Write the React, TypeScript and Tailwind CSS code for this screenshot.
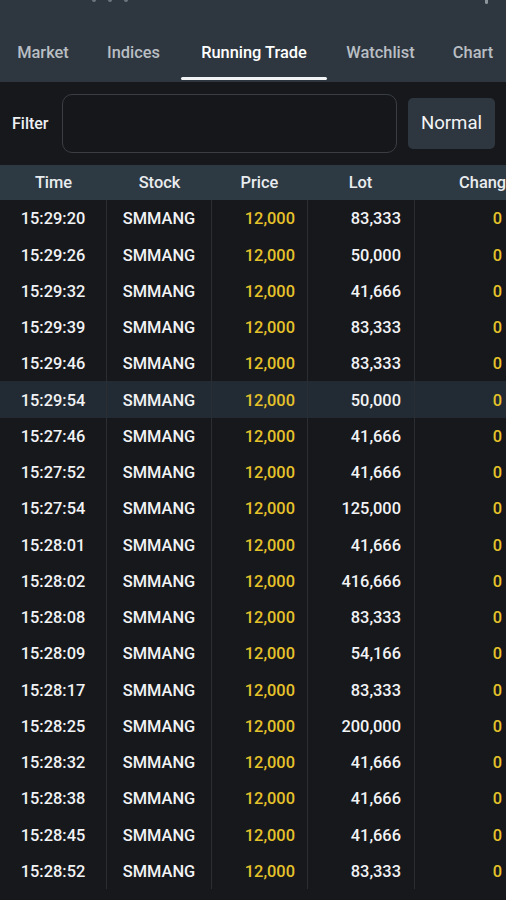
import React from "react";

const tabs = [
  { label: "Market", w: "w-[86px]" },
  { label: "Indices", w: "w-[95px]" },
  { label: "Running Trade", w: "w-[146px]", active: true },
  { label: "Watchlist", w: "w-[107px]" },
  { label: "Chart", w: "w-[78px]" },
];

const trades: [string, string][] = [
  ["15:29:20", "83,333"],
  ["15:29:26", "50,000"],
  ["15:29:32", "41,666"],
  ["15:29:39", "83,333"],
  ["15:29:46", "83,333"],
  ["15:29:54", "50,000"],
  ["15:27:46", "41,666"],
  ["15:27:52", "41,666"],
  ["15:27:54", "125,000"],
  ["15:28:01", "41,666"],
  ["15:28:02", "416,666"],
  ["15:28:08", "83,333"],
  ["15:28:09", "54,166"],
  ["15:28:17", "83,333"],
  ["15:28:25", "200,000"],
  ["15:28:32", "41,666"],
  ["15:28:38", "41,666"],
  ["15:28:45", "41,666"],
  ["15:28:52", "83,333"],
];

export default function App() {
  return (
    <div className="h-[900px] w-[506px] overflow-hidden bg-[#16181c] font-['Roboto',sans-serif] text-[16.4px] font-medium">
      {/* top tabs */}
      <div className="relative h-[82px] bg-[#2e3740]">
        <div className="absolute left-[92px] top-[-2px] flex gap-[12px]">
          <span className="h-[4px] w-[4px] rounded-full bg-[#6d767e]" />
          <span className="h-[4px] w-[4px] rounded-full bg-[#6d767e]" />
          <span className="h-[4px] w-[4px] rounded-full bg-[#6d767e]" />
        </div>
        <span className="absolute right-[18px] top-0 h-[4px] w-[3px] rounded-b bg-[#8d959c]" />
        <div className="flex h-full items-end whitespace-nowrap">
          {tabs.map((t) => (
            <div key={t.label} className={`${t.w} flex h-full shrink-0 flex-col items-center justify-end`}>
              <span className={`mb-[11px] ${t.active ? "text-white" : "text-[#b9bec3]"}`}>{t.label}</span>
              <span className={`mb-[2px] h-[3px] w-full rounded-full ${t.active ? "bg-[#f1f3f5]" : "bg-transparent"}`} />
            </div>
          ))}
        </div>
      </div>

      {/* filter row */}
      <div className="flex h-[83px] items-center">
        <span className="ml-[12px] w-[50px] text-[16px] text-[#eef0f2]">Filter</span>
        <div className="h-[59px] w-[335px] rounded-[10px] border border-[#3a3e44] bg-[#15171b]" />
        <button className="ml-[11px] flex h-[51px] w-[87px] items-center justify-center rounded-[5px] bg-[#2e363f] text-[18.6px] font-normal text-[#f3f4f6]">
          Normal
        </button>
      </div>

      {/* header */}
      <div className="flex h-[35px] items-center whitespace-nowrap bg-[#2e3a43] pt-[2px] text-[#e9ecef]">
        <div className="w-[107px] shrink-0 text-center">Time</div>
        <div className="w-[105px] shrink-0 text-center">Stock</div>
        <div className="w-[95px] shrink-0 text-center">Price</div>
        <div className="w-[107px] shrink-0 text-center">Lot</div>
        <div className="w-[146px] shrink-0 text-center">Change</div>
      </div>

      {/* rows */}
      <div>
        {trades.map(([time, lot], i) => (
          <div
            key={i}
            className={`flex h-[36.26px] items-center whitespace-nowrap ${i === 5 ? "bg-[#222b33]" : ""}`}
          >
            <div className="flex h-full w-[107px] shrink-0 items-center justify-center border-r border-[#2a2e33] pt-[3px] text-[#f2f3f5]">
              {time}
            </div>
            <div className="flex h-full w-[105px] shrink-0 items-center justify-center border-r border-[#2a2e33] pt-[3px] text-[#f2f3f5]">
              SMMANG
            </div>
            <div className="flex h-full w-[96px] shrink-0 items-center justify-end border-r border-[#2a2e33] pr-[12px] pt-[3px] text-[#e5c22a]">
              12,000
            </div>
            <div className="flex h-full w-[107px] shrink-0 items-center justify-end border-r border-[#2a2e33] pr-[13px] pt-[3px] text-[#f2f3f5]">
              {lot}
            </div>
            <div className="flex h-full w-[91px] shrink-0 items-center justify-end pr-[4px] pt-[3px] text-[#e5c22a]">0</div>
          </div>
        ))}
      </div>
    </div>
  );
}
